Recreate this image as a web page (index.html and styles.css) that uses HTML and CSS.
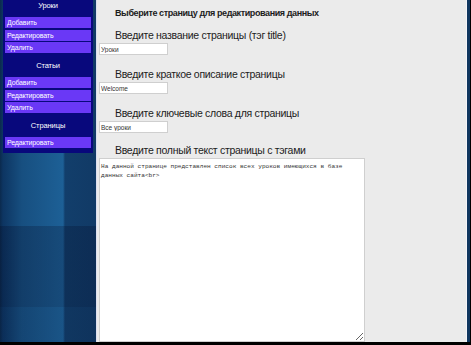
FILE: index.html
```html
<html>
<head>
  <link rel="stylesheet" href="styles.css">
  <title>Редактирование страниц</title>
</head>
<body>
<div class="frame">
  <div class="left">
    <div class="menu">
      <div class="head">Уроки</div>
      <a class="item" href="#">Добавить</a>
      <a class="item" href="#">Редактировать</a>
      <a class="item" href="#">Удалить</a>
      <div class="head gap">Статьи</div>
      <a class="item" href="#">Добавить</a>
      <a class="item" href="#">Редактировать</a>
      <a class="item" href="#">Удалить</a>
      <div class="head gap">Страницы</div>
      <a class="item" href="#">Редактировать</a>
    </div>
  </div>
  <div class="main">
    <h3 class="title">Выберите страницу для редактирования данных</h3>
    <form class="edit" action="#" method="post">
      <p class="lbl">Введите название страницы (тэг title)</p>
      <input class="field" type="text" value="Уроки">
      <p class="lbl">Введите краткое описание страницы</p>
      <input class="field" type="text" value="Welcome">
      <p class="lbl">Введите ключевые слова для страницы</p>
      <input class="field" type="text" value="Все уроки">
      <p class="lbl">Введите полный текст страницы с тэгами</p>
      <textarea class="text">На данной странице представлен список всех уроков имеющихся в базе данных сайта&lt;br&gt;</textarea>
    </form>
  </div>
  <div class="edge"></div>
</div>
</body>
</html>
```

FILE: styles.css
```css
html, body {
  margin: 0;
  padding: 0;
  background-color: #000;
  font-family: "Liberation Sans", Arial, sans-serif;
}

.frame {
  display: flex;
  width: 471px;
  height: 342px;
  border-bottom: 3px solid #000;
  overflow: hidden;
}

.left {
  flex-shrink: 0;
  width: 97px;
  padding-left: 3px;
  border-right: 1px solid #dcdff0;
  box-sizing: border-box;
  background:
    linear-gradient(to bottom, transparent 0, transparent 226px, rgba(0,0,25,0.22) 226px, rgba(0,0,25,0.22) 307px, rgba(0,0,25,0.12) 307px),
    linear-gradient(to right, #0b2a4d 0, #0d3562 3px, #174f80 22px, #1d6096 63px, #123e6b 65px, #113a66 96px);
}

.menu {
  display: flex;
  flex-direction: column;
  width: 90px;
  padding-bottom: 3px;
  background-color: #08087c;
}

.head {
  color: #fff;
  text-align: center;
  font-size: 7.5px;
  letter-spacing: -0.1px;
  height: 12px;
  line-height: 12px;
  margin-bottom: 5px;
}

.head.gap {
  margin-top: 5.5px;
}

.item {
  display: block;
  color: #fff;
  text-decoration: none;
  font-size: 7px;
  letter-spacing: -0.15px;
  height: 11px;
  line-height: 11px;
  margin: 0 2px 1.5px 2px;
  padding-left: 2px;
  background-color: #6a38f6;
}

.main {
  flex: 1;
  background-color: #ebebeb;
  padding: 7px 0 0 2px;
}

.title {
  margin: 0 0 10px 16px;
  font-size: 9px;
  letter-spacing: -0.4px;
  line-height: 12px;
  font-weight: bold;
  color: #1c1c1c;
}

.edit {
  margin: 0;
}

.lbl {
  margin: 0 0 2px 16px;
  font-size: 10.5px;
  letter-spacing: -0.3px;
  line-height: 12px;
  color: #1c1c1c;
}

.field {
  display: block;
  width: 69px;
  height: 12px;
  padding: 0 1px;
  margin: 0 0 13px 0;
  border: 1px solid #cfcfcf;
  background-color: #fff;
  font-family: "Liberation Sans", Arial, sans-serif;
  font-size: 6.5px;
  color: #333;
  box-sizing: border-box;
}

.field:nth-of-type(3) {
  margin-bottom: 11px;
}

.text {
  display: block;
  width: 266px;
  height: 184px;
  margin: 0;
  padding: 3px 1px;
  border: 1px solid #cfcfcf;
  background-color: #fff;
  font-family: "Liberation Mono", "Courier New", monospace;
  font-size: 6.1px;
  line-height: 9px;
  color: #333;
  resize: both;
  box-sizing: border-box;
}

.edge {
  flex-shrink: 0;
  width: 6px;
  background: linear-gradient(to right, #ebebeb 0, #ebebeb 1px, #f4f4f8 1px, #f4f4f8 2px, #10365f 2px, #10365f 5px, #000 5px);
}
```
